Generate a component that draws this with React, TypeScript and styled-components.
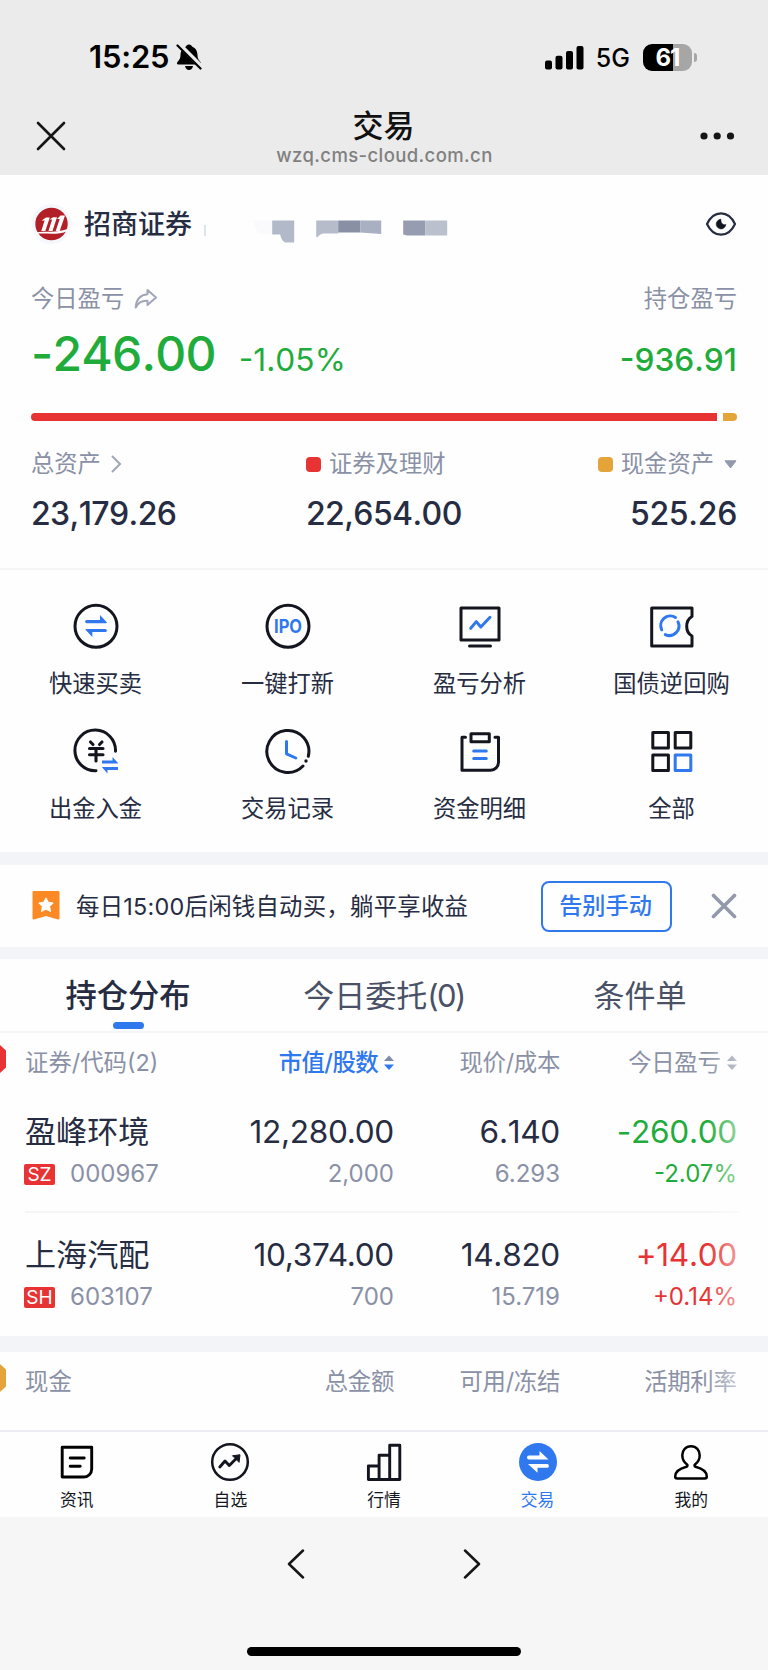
import React from "react";
import styled, { createGlobalStyle, css } from "styled-components";

const color = {
  ink: "#262c42",
  tabInk: "#4a5167",
  muted: "#8a91a6",
  green: "#1fac3b",
  red: "#e73333",
  gold: "#e4a43a",
  blue: "#2f78ee",
  paper: "#fefefe",
  band: "#f3f4f8",
  line: "#f4f5f7",
  icon: "#14161f",
};

const Global = createGlobalStyle`
  * { box-sizing: border-box; }
  body {
    margin: 0;
    background: #f6f6f6;
    font-family: Inter, "Noto Sans CJK SC", sans-serif;
    color: ${color.ink};
  }
  svg { display: block; flex: none; }
`;

const Screen = styled.div`
  width: 768px;
  height: 1670px;
  display: flex;
  flex-direction: column;
  overflow: hidden;
  background: ${color.paper};
`;

/* ---------- phone chrome ---------- */

const Chrome = styled.header`
  height: 175px;
  background: #ebebeb;
`;

const StatusBar = styled.div`
  height: 114px;
  padding: 0 71px 0 89px;
  display: flex;
  align-items: center;
  justify-content: space-between;
`;

const StatusGroup = styled.div`
  display: flex;
  align-items: center;
`;

const Clock = styled.span`
  font-size: 31px;
  line-height: 40px;
  font-weight: 600;
  color: #000;
  letter-spacing: -0.2px;
  margin-right: 7px;
`;

const Network = styled.span`
  font-size: 25px;
  line-height: 32px;
  font-weight: 500;
  color: #000;
  margin: 1px 13px 0 12px;
  letter-spacing: 0;
`;

const Battery = styled.div`
  width: 49px;
  height: 27px;
  border-radius: 9px;
  background: linear-gradient(to right, #000 30px, #a6a6a6 30px);
  color: #fff;
  font-size: 24px;
  font-weight: 700;
  line-height: 27px;
  text-align: center;
  letter-spacing: -1px;
`;

const BatteryTip = styled.div`
  width: 3px;
  height: 9px;
  margin-left: 2px;
  border-radius: 0 3px 3px 0;
  background: #a6a6a6;
`;

const NavBar = styled.div`
  height: 61px;
  padding: 0 36px;
  display: flex;
  justify-content: space-between;
`;

const NavTitle = styled.div`
  display: flex;
  flex-direction: column;
  align-items: center;
  margin: -6px 0 0 -2px;
`;

const PageName = styled.h1`
  margin: 0 2px 0 0;
  font-size: 31px;
  line-height: 36px;
  font-weight: 500;
  color: #111;
`;

const PageHost = styled.span`
  font-size: 18.5px;
  line-height: 22px;
  font-weight: 500;
  color: #808080;
  letter-spacing: 0.4px;
`;

const NavIcon = styled.div<{ $end?: boolean }>`
  width: 60px;
  padding-top: 7px;
  margin-right: ${(p) => (p.$end ? -3 : 0)}px;
  display: flex;
  justify-content: ${(p) => (p.$end ? "flex-end" : "flex-start")};
`;

/* ---------- account summary ---------- */

const Summary = styled.section`
  height: 395px;
  padding: 0 31px;
  border-bottom: 2px solid ${color.line};
`;

const AccountRow = styled.div`
  height: 98px;
  display: flex;
  align-items: center;
`;

const Broker = styled.span`
  font-size: 27px;
  line-height: 36px;
  font-weight: 500;
  margin: 2px 12px 0 11px;
`;

const Spacer = styled.div`
  flex: 1;
`;

const LabelRow = styled.div`
  display: flex;
  justify-content: space-between;
  margin-top: 11px;
`;

const Label = styled.div`
  display: flex;
  align-items: center;
  height: 30px;
  font-size: 23.3px;
  line-height: 30px;
  color: ${color.muted};
`;

const ProfitRow = styled.div`
  display: flex;
  align-items: baseline;
  margin-top: 12px;
  height: 56px;
  color: ${color.green};
  font-kerning: none;
`;

const DayProfit = styled.span`
  font-size: 48px;
  line-height: 56px;
  font-weight: 500;
  letter-spacing: -0.75px;
  margin-right: 23px;
`;

const ProfitFigure = styled.span<{ $total?: boolean }>`
  font-size: 31.7px;
  line-height: 40px;
  font-weight: ${(p) => (p.$total ? 500 : 400)};
  margin-left: ${(p) => (p.$total ? "auto" : "0")};
`;

const Allocation = styled.div`
  display: flex;
  gap: 6px;
  height: 8px;
  margin-top: 31px;
  border-radius: 4px;
  overflow: hidden;
`;

const Share = styled.div<{ $tone: string; $grow: number }>`
  flex: ${(p) => p.$grow} 0 0;
  background: ${(p) => p.$tone};
`;

const AssetRow = styled.div`
  display: grid;
  grid-template-columns: 275px 1fr auto;
  margin-top: 28px;
`;

const Asset = styled.div<{ $end?: boolean }>`
  display: flex;
  flex-direction: column;
  align-items: ${(p) => (p.$end ? "flex-end" : "flex-start")};
`;

const Swatch = styled.span<{ $tone: string }>`
  width: 15px;
  height: 15px;
  border-radius: 4px;
  margin-right: 8px;
  background: ${(p) => p.$tone};
`;

const AssetValue = styled.span<{ $tight?: boolean }>`
  margin-top: 15px;
  font-size: 32px;
  line-height: 40px;
  font-weight: 500;
  letter-spacing: ${(p) => (p.$tight ? -0.6 : -0.3)}px;
  font-kerning: none;
`;

/* ---------- shortcuts ---------- */

const Shortcuts = styled.section`
  height: 282px;
  padding-top: 32px;
  display: grid;
  grid-template-columns: repeat(4, 192px);
  grid-auto-rows: 125px;
`;

const Shortcut = styled.div`
  display: flex;
  flex-direction: column;
  align-items: center;
`;

const ShortcutName = styled.span`
  margin: 19px 1px 0 0;
  font-size: 23.3px;
  line-height: 30px;
`;

const Band = styled.div<{ $h: number }>`
  flex: none;
  height: ${(p) => p.$h}px;
  background: ${color.band};
`;

/* ---------- promotion ---------- */

const Promo = styled.section`
  height: 82px;
  padding: 0 31px;
  display: flex;
  align-items: center;
`;

const PromoText = styled.span`
  flex: 1;
  margin: 1px 0 0 15px;
  font-size: 23.4px;
  line-height: 32px;
  letter-spacing: 0.25px;
  white-space: nowrap;
`;

const PromoButton = styled.button`
  width: 131px;
  height: 51px;
  margin-right: 39px;
  padding: 0 2px 0 0;
  border: 2px solid ${color.blue};
  border-radius: 8px;
  background: transparent;
  color: ${color.blue};
  font: 500 23.2px/32px Inter, "Noto Sans CJK SC", sans-serif;
`;

/* ---------- positions ---------- */

const Tabs = styled.nav`
  height: 74px;
  display: grid;
  grid-template-columns: repeat(3, 1fr);
  border-bottom: 2px solid ${color.line};
`;

const Tab = styled.div<{ $active?: boolean }>`
  display: flex;
  flex-direction: column;
  align-items: center;
  padding-top: 17px;
  font-size: 31px;
  line-height: 40px;
  color: ${color.tabInk};
  ${(p) =>
    p.$active &&
    css`
      color: ${color.ink};
      font-size: 31.3px;
      font-weight: 500;
      &::after {
        content: "";
        width: 31px;
        height: 7px;
        margin-top: 6px;
        border-radius: 3.5px;
        background: ${color.blue};
      }
    `}
`;

const Count = styled.span`
  letter-spacing: -1.5px;
`;

const Holdings = styled.section`
  position: relative;
  height: 303px;
`;

const EdgeFade = styled.div`
  position: absolute;
  top: 0;
  right: 0;
  bottom: 0;
  width: 62px;
  background: linear-gradient(to right, rgba(254, 254, 254, 0), ${color.paper});
`;

const columns = css`
  display: grid;
  grid-template-columns: 240px 154px 166px 176.5px;
`;

const HeadRow = styled.div<{ $h: number }>`
  ${columns}
  height: ${(p) => p.$h}px;
  padding-top: 13.5px;
  font-size: 23.4px;
  line-height: 32px;
  color: ${color.muted};
`;

const HeadCell = styled.div<{ $first?: boolean; $active?: boolean }>`
  display: flex;
  align-items: center;
  height: 32px;
  gap: ${(p) => (p.$first ? 19 : 6)}px;
  justify-content: ${(p) => (p.$first ? "flex-start" : "flex-end")};
  letter-spacing: ${(p) => (p.$first ? 0 : p.$active ? -0.6 : -0.3)}px;
  white-space: nowrap;
  ${(p) =>
    p.$active &&
    css`
      color: ${color.blue};
      font-weight: 500;
    `}
`;

const Position = styled.div`
  ${columns}
  grid-template-columns: 215px 154px 166px 177px;
  height: 123px;
  margin-left: 25px;
  padding-top: 22px;
`;

const Separator = styled.div`
  height: 2px;
  margin: -2px 29px 0 25px;
  background: ${color.line};
`;

const Cell = styled.div<{ $first?: boolean; $tone?: string }>`
  display: flex;
  flex-direction: column;
  align-items: ${(p) => (p.$first ? "flex-start" : "flex-end")};
  color: ${(p) => p.$tone || color.ink};
`;

const Main = styled.span<{ $name?: boolean; $amount?: boolean }>`
  font-size: ${(p) => (p.$name ? 31.1 : 31.6)}px;
  line-height: 40px;
  letter-spacing: ${(p) => (p.$name ? 0 : -0.3)}px;
  font-kerning: ${(p) => (p.$amount ? "normal" : "none")};
`;

const Sub = styled.span<{ $inherit?: boolean }>`
  display: flex;
  align-items: center;
  margin-top: 5px;
  font-size: 24px;
  line-height: 34px;
  color: ${(p) => (p.$inherit ? "inherit" : color.muted)};
`;

const Market = styled.span`
  width: 31px;
  height: 21px;
  margin: 1px 15px 0 -1px;
  border-radius: 2px;
  background: ${color.red};
  color: #fff;
  font-size: 19px;
  line-height: 21px;
  text-align: center;
`;

const Cash = styled.section`
  position: relative;
  height: 78px;
`;

const Gap = styled.span<{ $w: number }>`
  width: ${(p) => p.$w}px;
`;

/* ---------- bottom bars ---------- */

const TabBar = styled.nav`
  height: 87px;
  border-top: 2px solid #ebedf3;
  display: grid;
  grid-template-columns: repeat(5, 1fr);
  background: ${color.paper};
`;

const TabItem = styled.div<{ $active?: boolean }>`
  display: flex;
  flex-direction: column;
  align-items: center;
  padding-top: 10px;
  font-size: 16.8px;
  line-height: 22px;
  color: ${(p) => (p.$active ? color.blue : color.icon)};
  svg { margin-bottom: 7px; }
`;

const Browser = styled.footer`
  flex: 1;
  display: flex;
  flex-direction: column;
  align-items: center;
  background: #f6f6f6;
`;

const History = styled.div`
  height: 93px;
  display: flex;
  align-items: center;
  gap: 156px;
`;

const HomeIndicator = styled.div`
  width: 274px;
  height: 9px;
  margin-top: 37px;
  border-radius: 5px;
  background: #000;
`;

/* ---------- drawings ---------- */

const BellOff = () => (
  <svg width="26" height="28" viewBox="0 0 26 28">
    <path d="M13 1.500c1.800 0 2.600 1 3 2 3.800 1.500 5.300 4.500 5.500 8.500.1 4 1.500 5.200 3.200 7.200.8 1.100.2 2.300-1 2.300H2.300c-1.200 0-1.800-1.200-1-2.300 1.700-2 3.100-3.200 3.200-7.200C4.700 8 6.200 5 10 3.500c.4-1 1.200-2 3-2z" />
    <path d="M9 23h8c-.5 2.600-2 4-4 4s-3.500-1.400-4-4z" />
    <path d="M2.500 1 26 24.500" stroke="#ebebeb" strokeWidth="5" />
    <path d="M1.500 2.500 24.500 25.500" stroke="#000" strokeWidth="2.200" strokeLinecap="round" />
  </svg>
);

const Signal = () => (
  <svg width="39" height="25" viewBox="0 0 39 25">
    <rect x="0" y="15.5" width="7" height="9" rx="2" />
    <rect x="10.5" y="10.8" width="7" height="13.7" rx="2" />
    <rect x="21" y="6" width="7" height="18.500" rx="2" />
    <rect x="31.5" y="1" width="7" height="23.500" rx="2" />
  </svg>
);

const BrokerMark = () => (
  <svg width="42" height="42" viewBox="0 0 42 42">
    <circle cx="20.500" cy="21" r="20" fill="#f4f7fc" />
    <circle cx="20.500" cy="21" r="16.200" fill="#b31f26" />
    <g fill="#fff">
      <path d="M10.500 17.500 15 14.500h3.800L14.300 28h-4l3.300-10.500z" />
      <path d="M18.500 16.500 22 14.300h4L21.500 28h-4l3.600-11.500z" />
      <path d="M26 16 29.500 12.500h4.500L28.700 28h-4l4-12z" />
      <path d="M5 29.500c9-1.700 20 .8 31.500-3.500v2C26 33 14 29.500 5.500 31z" />
    </g>
  </svg>
);

const Redaction = () => (
  <svg width="244" height="42" viewBox="0 0 244 42">
    <path d="M0 22h2v11H0z" fill="#dfe3ec" />
    <g transform="translate(2.200 -.5)">
      <path d="M46 18h20v13H52z" fill="#fafafd" />
      <path d="M66 18h22v22h-9q-4-2-5-8h-8z" fill="#b2b9c8" />
      <path d="M110 18h22v13h-14q-4 0-7 4l-1-1z" fill="#b6bcca" />
      <path d="M132 18h22v12h-22z" fill="#8990a5" />
      <path d="M154 18h21v13.500l-21-1.500z" fill="#a9b0c1" />
      <path d="M197 18h22v15h-18l-4-1z" fill="#969db1" />
      <path d="M219 18h22v15h-22z" fill="#bac0cd" />
    </g>
  </svg>
);

const Eye = () => (
  <svg width="32" height="26" viewBox="0 0 32 26">
    <path d="M2 13C5 6.500 10 2.300 16 2.300S27 6.500 30 13c-3 6.500-8 10.700-14 10.700S5 19.500 2 13z" fill="none" stroke={color.ink} strokeWidth="2.200" strokeLinejoin="round" />
    <path d="M16 8.300a4.800 4.800 0 1 0 4.800 5.200c-3 1-5.400-1.800-4.800-5.200z" fill={color.icon} stroke={color.icon} strokeWidth=".6" />
  </svg>
);

const ShareArrow = () => (
  <svg width="24" height="22" viewBox="0 0 24 22">
    <path d="M13.500 2 22 9.500 13.500 17v-4.300C8 12.200 4.500 14 1.700 19.500 2.200 12 6 7 13.500 6.300z" fill="none" stroke="#a0a6b8" strokeWidth="2" strokeLinejoin="round" />
  </svg>
);

const Chevron = () => (
  <svg width="12" height="20" viewBox="0 0 12 20">
    <path d="M2 2l8 8-8 8" fill="none" stroke="#a0a6b8" strokeWidth="2" />
  </svg>
);

const Caret = () => (
  <svg width="13" height="9" viewBox="0 0 13 9">
    <path d="M1 .8h11L6.500 8z" fill="#9299ad" stroke="#9299ad" strokeLinejoin="round" />
  </svg>
);

const Sort = ({ up, down }: { up: string; down: string }) => (
  <svg width="10" height="16" viewBox="0 0 10 16">
    <path d="M0 6 5 .5 10 6z" fill={up} />
    <path d="M0 9.500h10L5 15z" fill={down} />
  </svg>
);

const HexShape = styled.svg`
  margin-top: -7px;
`;

const EdgeHex = ({ tone }: { tone: string }) => (
  <HexShape width="6" height="28" viewBox="0 0 6 28">
    <path d="M0 0 6 5.500v17L0 28z" fill={tone} />
  </HexShape>
);

const Frame = ({ children }: { children: React.ReactNode }) => (
  <svg width="48" height="48" viewBox="0 0 48 48" fill="none" stroke={color.icon} strokeWidth="3" strokeLinecap="round" strokeLinejoin="round">
    {children}
  </svg>
);

const QuickTrade = () => (
  <Frame>
    <circle cx="24" cy="24.3" r="21" />
    <g fill={color.blue} stroke="none">
      <path d="M14.700 18H28v-5l7 7.600q-.3.600-1 .6H14.700a1.600 1.600 0 0 1 0-3.200z" />
      <path d="M33.300 30.100H20.300v5l-7-7.600q.3-.6 1-.6h19a1.600 1.600 0 0 1 0 3.200z" />
    </g>
  </Frame>
);

const Ipo = () => (
  <Frame>
    <circle cx="24" cy="24.3" r="21" />
    <text x="10" y="31" textLength="28" lengthAdjust="spacingAndGlyphs" fill={color.blue} stroke="none" fontFamily="Inter, sans-serif" fontWeight="700" fontSize="18.500">IPO</text>
  </Frame>
);

const Analysis = () => (
  <Frame>
    <rect x="5" y="6" width="38" height="32" />
    <path d="M13.500 44h21" />
    <path d="M14.700 26.300 20.300 19.600l4.500 5.400L34 15.300" stroke={color.blue} />
  </Frame>
);

const Repo = () => (
  <Frame>
    <path d="M44 6H3.700v38H44V34C40.300 32 38.700 28 38.700 24.500s1.600-8 5.300-10z" />
    <path d="M27.500 15.500A9.600 9.600 0 0 0 13.700 27.800M17.300 32.600A9.600 9.600 0 0 0 30 19.800" stroke={color.blue} />
  </Frame>
);

const Transfer = () => (
  <Frame>
    <path d="M43.500 24.300A20.300 20.300 0 1 0 24 43.700" />
    <path d="M18.500 15l2.500 2.500M30 15l-2.500 2.500M17.500 21.500h13.500M17.500 27.800h13.500M24 21.500v12.500" strokeWidth="3.100" />
    <g fill={color.blue} stroke="none">
      <path d="M30 33.400h10.500v-3.400l5.500 6.100v.3H30z" />
      <path d="M46 43H35.500v3.400L30 40.300V40h16z" />
    </g>
  </Frame>
);

const Records = () => (
  <Frame>
    <path d="M44.300 29.300A21 21 0 1 0 39 39" />
    <circle cx="42" cy="34" r="1.700" fill={color.icon} stroke="none" />
    <path d="M22.500 14.500v12.300l9.300 4.200" stroke={color.blue} />
  </Frame>
);

const Statement = () => (
  <Frame>
    <path d="M9.500 10.200H6v33h28.500a8 8 0 0 0 8-8v-25H39" />
    <rect x="15" y="6.8" width="18.300" height="8" />
    <path d="M17.700 24h12.600M17.700 31.600h12.600" stroke={color.blue} />
  </Frame>
);

const All = () => (
  <Frame>
    <rect x="4.8" y="5.5" width="15.600" height="15.600" />
    <rect x="27.200" y="5.5" width="15.600" height="15.600" />
    <rect x="4.8" y="28" width="15.600" height="15.600" />
    <rect x="27.200" y="28" width="15.600" height="15.600" stroke={color.blue} />
  </Frame>
);

const Ribbon = () => (
  <svg width="30" height="30" viewBox="0 0 30 30">
    <path d="M2.500 0h25a1 1 0 0 1 1 1v26.500q-.2 1.200-1.500 1L15 25 3 28.500q-1.300.2-1.500-1V1a1 1 0 0 1 1-1z" fill="#fb8a24" />
    <path d="m15 6.800 2.300 4.400 4.900.8-3.500 3.500.8 5-4.500-2.300-4.500 2.300.8-5-3.500-3.500 4.900-.8z" fill="#fff" stroke="#fff" strokeLinejoin="round" />
  </svg>
);

const TabIcon = ({ children }: { children: React.ReactNode }) => (
  <svg width="40" height="40" viewBox="0 0 40 40" fill="none" stroke={color.icon} strokeWidth="2.900" strokeLinecap="round" strokeLinejoin="round">
    {children}
  </svg>
);

const shortcuts = [
  { name: "快速买卖", icon: <QuickTrade /> },
  { name: "一键打新", icon: <Ipo /> },
  { name: "盈亏分析", icon: <Analysis /> },
  { name: "国债逆回购", icon: <Repo /> },
  { name: "出金入金", icon: <Transfer /> },
  { name: "交易记录", icon: <Records /> },
  { name: "资金明细", icon: <Statement /> },
  { name: "全部", icon: <All /> },
];

const positions = [
  { name: "盈峰环境", market: "SZ", code: "000967", value: "12,280.00", shares: "2,000", price: "6.140", cost: "6.293", profit: "-260.00", rate: "-2.07%", tone: color.green },
  { name: "上海汽配", market: "SH", code: "603107", value: "10,374.00", shares: "700", price: "14.820", cost: "15.719", profit: "+14.00", rate: "+0.14%", tone: color.red },
];

const tabItems = [
  { name: "资讯", icon: <><path d="M5.200 5.300h29.500v21.700a8 8 0 0 1-8 8H5.200z" stroke="#000" /><path d="M13.200 16h14M13.200 24.300h10" stroke="#000" /></> },
  { name: "自选", icon: <><circle cx="20" cy="20" r="17.800" strokeWidth="2.500" /><path d="M9.800 25 15 19l4.300 4.500 7-7" /><path d="M22.800 13.700 30 12.800l-.9 7.200z" fill={color.icon} strokeWidth="1" /></> },
  { name: "行情", icon: <path d="M4.400 24h10.700v13.500H4.400zM15.100 13.300h10.600v24.200H15.100zM25.700 3.300h10.100v34.200H25.700z" /> },
  { name: "交易", active: true, icon: <><circle cx="20" cy="20" r="19" fill={color.blue} stroke="none" /><g fill="#fff" stroke="none"><path d="M11 13.500h10.500V9l9 8.500H11a2 2 0 0 1 0-4z" /><path d="M29 25.800H19.500v5L10 22h19a1.900 1.900 0 0 1 0 3.800z" /></g></> },
  { name: "我的", icon: <path d="M20 4.300c5.300 0 8.700 3.800 8.700 9 0 4-2 7.200-4.700 9.200-.8.700-.6 2 .5 2.300C31 26.500 35.800 29.500 35.800 34.500q0 2-2 2H6.200q-2 0-2-2c0-5 4.800-8 11.300-9.700 1.100-.3 1.300-1.600.5-2.300-2.700-2-4.700-5.200-4.700-9.200 0-5.200 3.400-9 8.700-9z" strokeWidth="2.500" stroke="#000" /> },
];

/* ---------- tables ---------- */

function HoldingsTable() {
  return (
    <Holdings>
      <HeadRow $h={57}>
        <HeadCell $first><EdgeHex tone={color.red} />证券/代码(2)</HeadCell>
        <HeadCell $active>市值/股数<Sort up="#7f8aa8" down={color.blue} /></HeadCell>
        <HeadCell>现价/成本</HeadCell>
        <HeadCell>今日盈亏<Sort up="#7f869c" down="#7f869c" /></HeadCell>
      </HeadRow>
      {positions.map((p, i) => (
        <React.Fragment key={p.code}>
          {i > 0 && <Separator />}
          <Position>
            <Cell $first>
              <Main $name>{p.name}</Main>
              <Sub><Market>{p.market}</Market>{p.code}</Sub>
            </Cell>
            <Cell><Main $amount>{p.value}</Main><Sub>{p.shares}</Sub></Cell>
            <Cell><Main>{p.price}</Main><Sub>{p.cost}</Sub></Cell>
            <Cell $tone={p.tone}><Main>{p.profit}</Main><Sub $inherit>{p.rate}</Sub></Cell>
          </Position>
        </React.Fragment>
      ))}
      <EdgeFade />
    </Holdings>
  );
}

function CashTable() {
  return (
    <Cash>
      <HeadRow $h={78}>
        <HeadCell $first><EdgeHex tone={color.gold} />现金</HeadCell>
        <HeadCell>总金额</HeadCell>
        <HeadCell>可用/冻结</HeadCell>
        <HeadCell>活期利率</HeadCell>
      </HeadRow>
      <EdgeFade />
    </Cash>
  );
}

export default function App() {
  return (
    <Screen>
      <Global />
      <Chrome>
        <StatusBar>
          <StatusGroup>
            <Clock>15:25</Clock>
            <BellOff />
          </StatusGroup>
          <StatusGroup>
            <Signal />
            <Network>5G</Network>
            <Battery>61</Battery>
            <BatteryTip />
          </StatusGroup>
        </StatusBar>
        <NavBar>
          <NavIcon>
            <svg width="30" height="30" viewBox="0 0 30 30">
              <path d="M2 2l26 26M28 2 2 28" stroke="#161616" strokeWidth="2.600" strokeLinecap="round" />
            </svg>
          </NavIcon>
          <NavTitle>
            <PageName>交易</PageName>
            <PageHost>wzq.cms-cloud.com.cn</PageHost>
          </NavTitle>
          <NavIcon $end>
            <svg width="36" height="30" viewBox="0 0 36 30" fill="#161616">
              <circle cx="5" cy="15" r="3.600" />
              <circle cx="18.2" cy="15" r="3.600" />
              <circle cx="31.5" cy="15" r="3.600" />
            </svg>
          </NavIcon>
        </NavBar>
      </Chrome>

      <Summary>
        <AccountRow>
          <BrokerMark />
          <Broker>招商证券</Broker>
          <Redaction />
          <Spacer />
          <Eye />
        </AccountRow>
        <LabelRow>
          <Label>今日盈亏<Gap $w={10} /><ShareArrow /></Label>
          <Label>持仓盈亏</Label>
        </LabelRow>
        <ProfitRow>
          <DayProfit>-246.00</DayProfit>
          <ProfitFigure>-1.05%</ProfitFigure>
          <ProfitFigure $total>-936.91</ProfitFigure>
        </ProfitRow>
        <Allocation>
          <Share $tone={color.red} $grow={686} />
          <Share $tone={color.gold} $grow={14} />
        </Allocation>
        <AssetRow>
          <Asset>
            <Label>总资产<Gap $w={9} /><Chevron /></Label>
            <AssetValue $tight>23,179.26</AssetValue>
          </Asset>
          <Asset>
            <Label><Swatch $tone={color.red} />证券及理财</Label>
            <AssetValue $tight>22,654.00</AssetValue>
          </Asset>
          <Asset $end>
            <Label><Swatch $tone={color.gold} />现金资产<Gap $w={10} /><Caret /></Label>
            <AssetValue>525.26</AssetValue>
          </Asset>
        </AssetRow>
      </Summary>

      <Shortcuts>
        {shortcuts.map((s) => (
          <Shortcut key={s.name}>
            {s.icon}
            <ShortcutName>{s.name}</ShortcutName>
          </Shortcut>
        ))}
      </Shortcuts>

      <Band $h={13} />
      <Promo>
        <Ribbon />
        <PromoText>每日15:00后闲钱自动买，躺平享收益</PromoText>
        <PromoButton>告别手动</PromoButton>
        <svg width="26" height="26" viewBox="0 0 26 26">
          <path d="M2.500 2.500l21 21M23.500 2.500l-21 21" stroke="#9299ab" strokeWidth="3.600" strokeLinecap="round" />
        </svg>
      </Promo>
      <Band $h={12} />

      <Tabs>
        <Tab $active>持仓分布</Tab>
        <Tab><span>今日委托<Count>(0)</Count></span></Tab>
        <Tab>条件单</Tab>
      </Tabs>

      <HoldingsTable />
      <Band $h={16} />
      <CashTable />

      <TabBar>
        {tabItems.map((t) => (
          <TabItem key={t.name} $active={t.active}>
            <TabIcon>{t.icon}</TabIcon>
            {t.name}
          </TabItem>
        ))}
      </TabBar>

      <Browser>
        <History>
          <svg width="20" height="30" viewBox="0 0 20 30" fill="none" stroke="#161616" strokeWidth="2.500" strokeLinecap="round" strokeLinejoin="round">
            <path d="M17 1.500 3 15l14 13.500" />
          </svg>
          <svg width="20" height="30" viewBox="0 0 20 30" fill="none" stroke="#161616" strokeWidth="2.500" strokeLinecap="round" strokeLinejoin="round">
            <path d="M3 1.500 17 15 3 28.500" />
          </svg>
        </History>
        <HomeIndicator />
      </Browser>
    </Screen>
  );
}
